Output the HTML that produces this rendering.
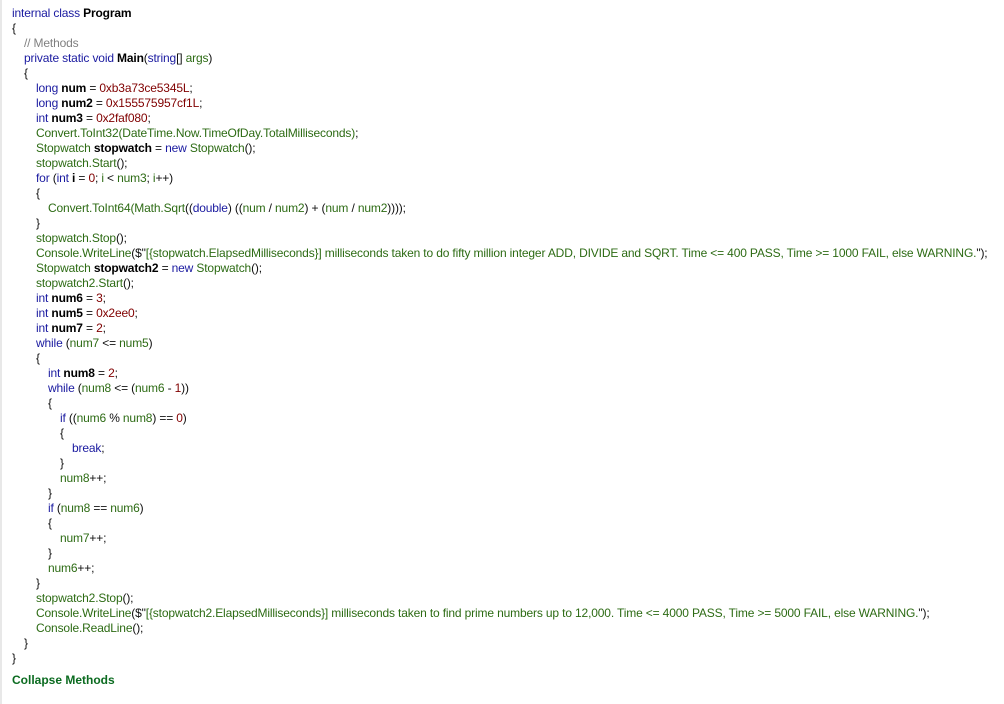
<!DOCTYPE html>
<html><head><meta charset="utf-8"><style>
html,body{margin:0;padding:0;background:#fff;width:1004px;height:704px;overflow:hidden}
body{border-left:2px solid #e8e8e8;box-sizing:border-box}
#c{position:absolute;left:12px;top:6px;font-family:"Liberation Sans",sans-serif;font-size:12px;line-height:15px;white-space:pre;color:#101010;letter-spacing:-0.15px;tab-size:12px;-moz-tab-size:12px}
.k{color:#1a1aa0}.g{color:#2d6b14}.n{color:#800000}.c{color:#808080}b{font-weight:bold;color:#000}
#f{position:absolute;left:12px;top:673px;font-family:"Liberation Sans",sans-serif;font-size:12px;font-weight:bold;color:#0b6b20}
</style></head><body><div id="c"><span class="k">internal class</span> <b>Program</b>
{
	<span class="c">// Methods</span>
	<span class="k">private static void</span> <b>Main</b>(<span class="k">string</span>[] <span class="g">args</span>)
	{
		<span class="k">long</span> <b>num</b> = <span class="n">0xb3a73ce5345L</span>;
		<span class="k">long</span> <b>num2</b> = <span class="n">0x155575957cf1L</span>;
		<span class="k">int</span> <b>num3</b> = <span class="n">0x2faf080</span>;
		<span class="g">Convert.ToInt32(DateTime.Now.TimeOfDay.TotalMilliseconds)</span>;
		<span class="g">Stopwatch</span> <b>stopwatch</b> = <span class="k">new</span> <span class="g">Stopwatch</span>();
		<span class="g">stopwatch.Start</span>();
		<span class="k">for</span> (<span class="k">int</span> <b>i</b> = <span class="n">0</span>; <span class="g">i</span> &lt; <span class="g">num3</span>; <span class="g">i</span>++)
		{
			<span class="g">Convert.ToInt64(Math.Sqrt</span>((<span class="k">double</span>) ((<span class="g">num</span> / <span class="g">num2</span>) + (<span class="g">num</span> / <span class="g">num2</span>))));
		}
		<span class="g">stopwatch.Stop</span>();
		<span class="g">Console.WriteLine</span>($"<span class="g">[{stopwatch.ElapsedMilliseconds}] milliseconds taken to do fifty million integer ADD, DIVIDE and SQRT. Time &lt;= 400 PASS, Time &gt;= 1000 FAIL, else WARNING.</span>");
		<span class="g">Stopwatch</span> <b>stopwatch2</b> = <span class="k">new</span> <span class="g">Stopwatch</span>();
		<span class="g">stopwatch2.Start</span>();
		<span class="k">int</span> <b>num6</b> = <span class="n">3</span>;
		<span class="k">int</span> <b>num5</b> = <span class="n">0x2ee0</span>;
		<span class="k">int</span> <b>num7</b> = <span class="n">2</span>;
		<span class="k">while</span> (<span class="g">num7</span> &lt;= <span class="g">num5</span>)
		{
			<span class="k">int</span> <b>num8</b> = <span class="n">2</span>;
			<span class="k">while</span> (<span class="g">num8</span> &lt;= (<span class="g">num6</span> - <span class="n">1</span>))
			{
				<span class="k">if</span> ((<span class="g">num6</span> % <span class="g">num8</span>) == <span class="n">0</span>)
				{
					<span class="k">break</span>;
				}
				<span class="g">num8</span>++;
			}
			<span class="k">if</span> (<span class="g">num8</span> == <span class="g">num6</span>)
			{
				<span class="g">num7</span>++;
			}
			<span class="g">num6</span>++;
		}
		<span class="g">stopwatch2.Stop</span>();
		<span class="g">Console.WriteLine</span>($"<span class="g">[{stopwatch2.ElapsedMilliseconds}] milliseconds taken to find prime numbers up to 12,000. Time &lt;= 4000 PASS, Time &gt;= 5000 FAIL, else WARNING.</span>");
		<span class="g">Console.ReadLine</span>();
	}
}</div>
<div id="f">Collapse Methods</div>
</body></html>
